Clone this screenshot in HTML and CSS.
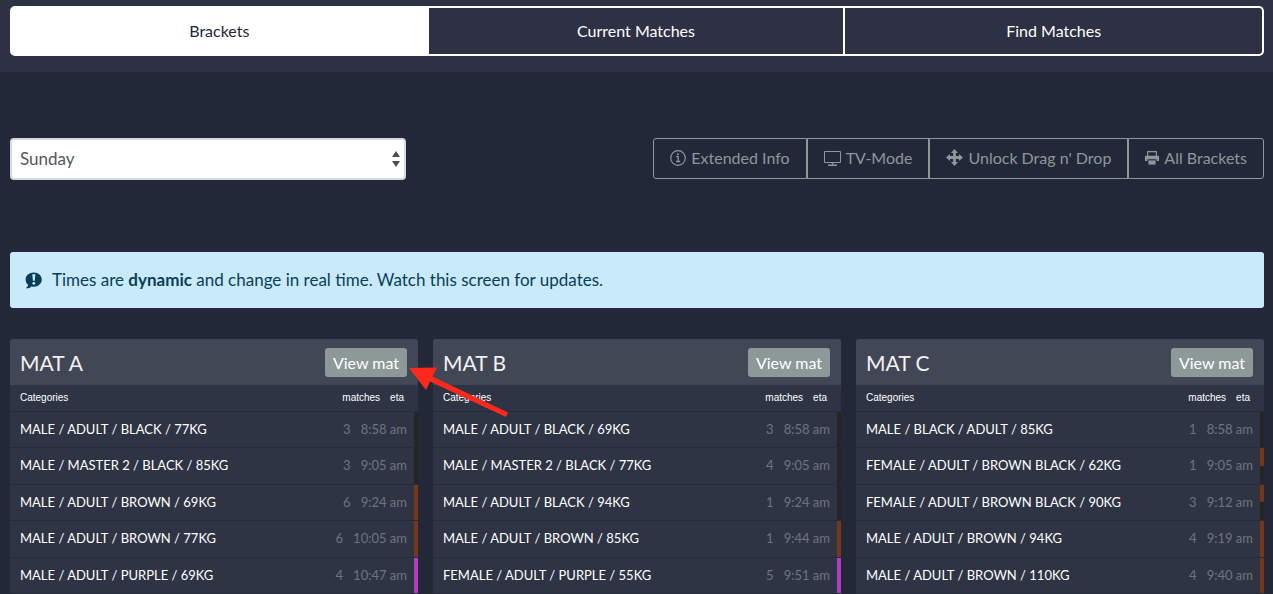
FILE: index.html
```html
<!DOCTYPE html>
<html lang="en">
<head>
    <meta charset="UTF-8">
    <meta name="viewport" content="width=device-width, initial-scale=1.0">
    <title>Brackets</title>
    <link rel="stylesheet" href="styles.css">
</head>
<body>
    <header class="header-top">
        <nav class="tabs">
            <a href="#brackets" class="tab active">Brackets</a>
            <a href="#current" class="tab">Current Matches</a>
            <a href="#find" class="tab">Find Matches</a>
        </nav>
    </header>
    <main class="container">
        <div class="toolbar">
            <div class="day">
                <select class="day-select" name="day" aria-label="Day">
                    <option>Saturday</option>
                    <option selected>Sunday</option>
                </select>
                <svg class="day-arrows" width="8" height="16" viewBox="0 0 8 16" fill="#4c4f54" aria-hidden="true">
                    <path d="M4 0L8 6H0z"/>
                    <path d="M4 16L0 10h8z"/>
                </svg>
            </div>
            <div class="btn-group">
                <button type="button" class="btn">
                    <svg width="16" height="16" viewBox="0 0 16 16" fill="none" stroke="currentColor" aria-hidden="true">
                        <circle cx="8" cy="8" r="7.3" stroke-width="1.2"/>
                        <path d="M6.2 6.6h2v4.8M6 11.5h4.2" stroke-width="1.3"/>
                        <circle cx="7.8" cy="4.2" r="1" fill="currentColor" stroke="none"/>
                    </svg>
                    Extended Info
                </button>
                <button type="button" class="btn">
                    <svg width="17" height="16" viewBox="0 0 17 16" fill="none" stroke="currentColor" aria-hidden="true">
                        <path d="M.5 1.5h16v11H.5z"/>
                        <path d="M8.5 12.5v2.5M4 15.2h9" stroke-width="1.4"/>
                    </svg>
                    TV-Mode
                </button>
                <button type="button" class="btn">
                    <svg width="17" height="17" viewBox="0 0 16 16" fill="currentColor" aria-hidden="true">
                        <path d="M8 0l3.3 3.8h-2v2.9h2.9v-2L16 8l-3.8 3.3v-2H9.3v2.9h2L8 16l-3.3-3.8h2V9.3H3.8v2L0 8l3.8-3.3v2h2.9V3.8h-2z"/>
                    </svg>
                    Unlock Drag n' Drop
                </button>
                <button type="button" class="btn">
                    <svg width="14" height="14" viewBox="0 0 14 14" aria-hidden="true">
                        <path d="M2.6 5V.6h8.8V5" fill="none" stroke="currentColor" stroke-width="1.2"/>
                        <path d="M1 4.8h12a1 1 0 0 1 1 1V10h-2.4V8.2H2.4V10H0V5.8a1 1 0 0 1 1-1z" fill="currentColor"/>
                        <path d="M3.4 9.4h7.2v4.2H3.4z" fill="currentColor"/>
                    </svg>
                    All Brackets
                </button>
            </div>
        </div>

        <div class="alert">
            <svg width="17" height="17" viewBox="0 0 17 17" aria-hidden="true">
                <path d="M8.8.5C4.2.5.6 3.6.6 7.5c0 2.3.9 4 2.4 5.3 0 1.5-.9 2.6-2.5 3.4 2.6.4 4.5-.3 5.8-1.8.8.2 1.6.3 2.5.3 4.5 0 8-3.2 8-7.2S13.3.5 8.8.5z" fill="#093f56"/>
                <path d="M7.3 2.3h3l-.6 6.5H7.9z" fill="#c9eafb"/>
                <circle cx="8.8" cy="11.3" r="1.4" fill="#c9eafb"/>
            </svg>
            <p>Times are <strong>dynamic</strong> and change in real time. Watch this screen for updates.</p>
        </div>

        <div class="mats">
            <section class="mat">
                <div class="mat-header">
                    <h2 class="mat-title">MAT A</h2>
                    <button type="button" class="view-mat">View mat</button>
                </div>
                <svg class="pointer" width="102" height="52" viewBox="0 0 102 52" aria-hidden="true">
                    <path d="M1 2L29 1.5 24.5 10.5 100 46.5 98 51 22 15.5 18 24z" fill="#fd291d"/>
                </svg>
                <table class="list">
                    <thead>
                        <tr><th class="category">Categories</th><th>matches</th><th class="eta">eta</th></tr>
                    </thead>
                    <tbody>
                        <tr><td class="category">MALE / ADULT / BLACK / 77KG</td><td>3</td><td class="eta">8:58 am</td><td class="belt black"></td></tr>
                        <tr><td class="category">MALE / MASTER 2 / BLACK / 85KG</td><td>3</td><td class="eta">9:05 am</td><td class="belt black"></td></tr>
                        <tr><td class="category">MALE / ADULT / BROWN / 69KG</td><td>6</td><td class="eta">9:24 am</td><td class="belt brown"></td></tr>
                        <tr><td class="category">MALE / ADULT / BROWN / 77KG</td><td>6</td><td class="eta">10:05 am</td><td class="belt brown"></td></tr>
                        <tr><td class="category">MALE / ADULT / PURPLE / 69KG</td><td>4</td><td class="eta">10:47 am</td><td class="belt purple"></td></tr>
                    </tbody>
                </table>
            </section>
            <section class="mat">
                <div class="mat-header">
                    <h2 class="mat-title">MAT B</h2>
                    <button type="button" class="view-mat">View mat</button>
                </div>
                <table class="list">
                    <thead>
                        <tr><th class="category">Categories</th><th>matches</th><th class="eta">eta</th></tr>
                    </thead>
                    <tbody>
                        <tr><td class="category">MALE / ADULT / BLACK / 69KG</td><td>3</td><td class="eta">8:58 am</td><td class="belt black"></td></tr>
                        <tr><td class="category">MALE / MASTER 2 / BLACK / 77KG</td><td>4</td><td class="eta">9:05 am</td><td class="belt black"></td></tr>
                        <tr><td class="category">MALE / ADULT / BLACK / 94KG</td><td>1</td><td class="eta">9:24 am</td><td class="belt black"></td></tr>
                        <tr><td class="category">MALE / ADULT / BROWN / 85KG</td><td>1</td><td class="eta">9:44 am</td><td class="belt brown"></td></tr>
                        <tr><td class="category">FEMALE / ADULT / PURPLE / 55KG</td><td>5</td><td class="eta">9:51 am</td><td class="belt purple"></td></tr>
                    </tbody>
                </table>
            </section>
            <section class="mat">
                <div class="mat-header">
                    <h2 class="mat-title">MAT C</h2>
                    <button type="button" class="view-mat">View mat</button>
                </div>
                <table class="list">
                    <thead>
                        <tr><th class="category">Categories</th><th>matches</th><th class="eta">eta</th></tr>
                    </thead>
                    <tbody>
                        <tr><td class="category">MALE / BLACK / ADULT / 85KG</td><td>1</td><td class="eta">8:58 am</td><td class="belt black"></td></tr>
                        <tr><td class="category">FEMALE / ADULT / BROWN BLACK / 62KG</td><td>1</td><td class="eta">9:05 am</td><td class="belt brown-black"></td></tr>
                        <tr><td class="category">FEMALE / ADULT / BROWN BLACK / 90KG</td><td>3</td><td class="eta">9:12 am</td><td class="belt brown-black"></td></tr>
                        <tr><td class="category">MALE / ADULT / BROWN / 94KG</td><td>4</td><td class="eta">9:19 am</td><td class="belt brown"></td></tr>
                        <tr><td class="category">MALE / ADULT / BROWN / 110KG</td><td>4</td><td class="eta">9:40 am</td><td class="belt brown"></td></tr>
                    </tbody>
                </table>
            </section>
        </div>
    </main>
</body>
</html>
```
FILE: styles.css
```css
* {
    margin: 0;
    padding: 0;
    box-sizing: border-box;
}
body {
    background-color: #222838;
    font-family: Futura, Lato, sans-serif;
    font-size: 16px;
    color: white;
}
button, select {
    font-family: inherit;
    font-size: inherit;
}
.header-top {
    background-color: #2e3044;
    padding: 6px 9px 16px 10px;
}
.tabs {
    display: grid;
    grid-template-columns: repeat(3, 1fr);
    border: 2px solid white;
    border-radius: 5px;
}
.tab {
    color: white;
    text-align: center;
    text-decoration: none;
    line-height: 46px;
    border-right: 2px solid white;
}
.tab:last-child {
    border-right: none;
}
.tab.active {
    background-color: white;
    color: #222838;
}
.container {
    padding: 66px 9px 0 10px;
}

/* toolbar */
.toolbar {
    display: flex;
    justify-content: space-between;
    align-items: flex-start;
}
.day {
    position: relative;
    width: calc(33.33% - 22px);
}
.day-select {
    appearance: none;
    display: block;
    width: 100%;
    height: 42px;
    padding: 0 8px 2px;
    background-color: white;
    color: #55585c;
    border: 2px solid #d6d9df;
    border-radius: 4px;
    font-size: 17px;
}
.day-arrows {
    position: absolute;
    right: 6px;
    top: 13px;
    pointer-events: none;
}
.btn-group {
    display: flex;
}
.btn {
    display: flex;
    align-items: center;
    gap: 5px;
    height: 41px;
    padding: 0 16px 2px;
    background: none;
    border: 1px solid #8d9899;
    color: #8d9899;
    cursor: pointer;
}
.btn:first-child {
    border-radius: 3px 0 0 3px;
}
.btn:last-child {
    border-radius: 0 3px 3px 0;
}
.btn:hover {
    color: white;
}

.alert {
    display: flex;
    align-items: center;
    gap: 10px;
    margin-top: 72px;
    padding: 0 15px;
    font-size: 17px;
    line-height: 56px;
    background-color: #c9eafb;
    color: #093f56;
    border-radius: 3px;
}

/* mats */
.mats {
    display: grid;
    grid-template-columns: repeat(3, 1fr);
    gap: 15px;
    margin-top: 31px;
}
.mat {
    position: relative;
    background-color: #2e3444;
    border-radius: 3px 3px 0 0;
}
.mat-header {
    display: flex;
    justify-content: space-between;
    align-items: center;
    height: 46px;
    padding: 0 11px 0 10px;
    background-color: #414754;
    border-radius: 3px 3px 0 0;
}
.mat-title {
    font-size: 21px;
    font-weight: 400;
    color: #f2f2f2;
}
.view-mat {
    height: 29px;
    padding: 0 8px;
    background-color: #8d9899;
    color: white;
    border: none;
    border-radius: 3px;
    cursor: pointer;
}
.list {
    display: block;
}
.list thead, .list tbody {
    display: block;
}
.list tr {
    display: flex;
    align-items: center;
    gap: 10px;
    height: 36px;
    padding-left: 10px;
    border-bottom: 1px solid #252b3a;
}
.list tbody tr:nth-child(even) {
    height: 37px;
}
.list thead tr {
    height: 27px;
    padding-right: 14px;
}
.list th {
    padding-bottom: 2px;
    font-family: Helvetica, "Liberation Sans", sans-serif;
    font-size: 10px;
    font-weight: 400;
}
.list td {
    padding-bottom: 2px;
    font-size: 13px;
    color: #6f747f;
}
.list .category {
    flex: 1;
    text-align: left;
    color: white;
}
.list .belt {
    align-self: stretch;
    width: 4px;
    margin-left: -3px;
}
.black {
    background-color: #252525;
}
.brown {
    background-color: #77351a;
}
.purple {
    background-color: #b53bc6;
}
.brown-black {
    background: linear-gradient(#77351a 50%, #252525 50%);
}

/* red arrow over the first mat */
.pointer {
    position: absolute;
    left: 398px;
    top: 27px;
    z-index: 1;
}
```
